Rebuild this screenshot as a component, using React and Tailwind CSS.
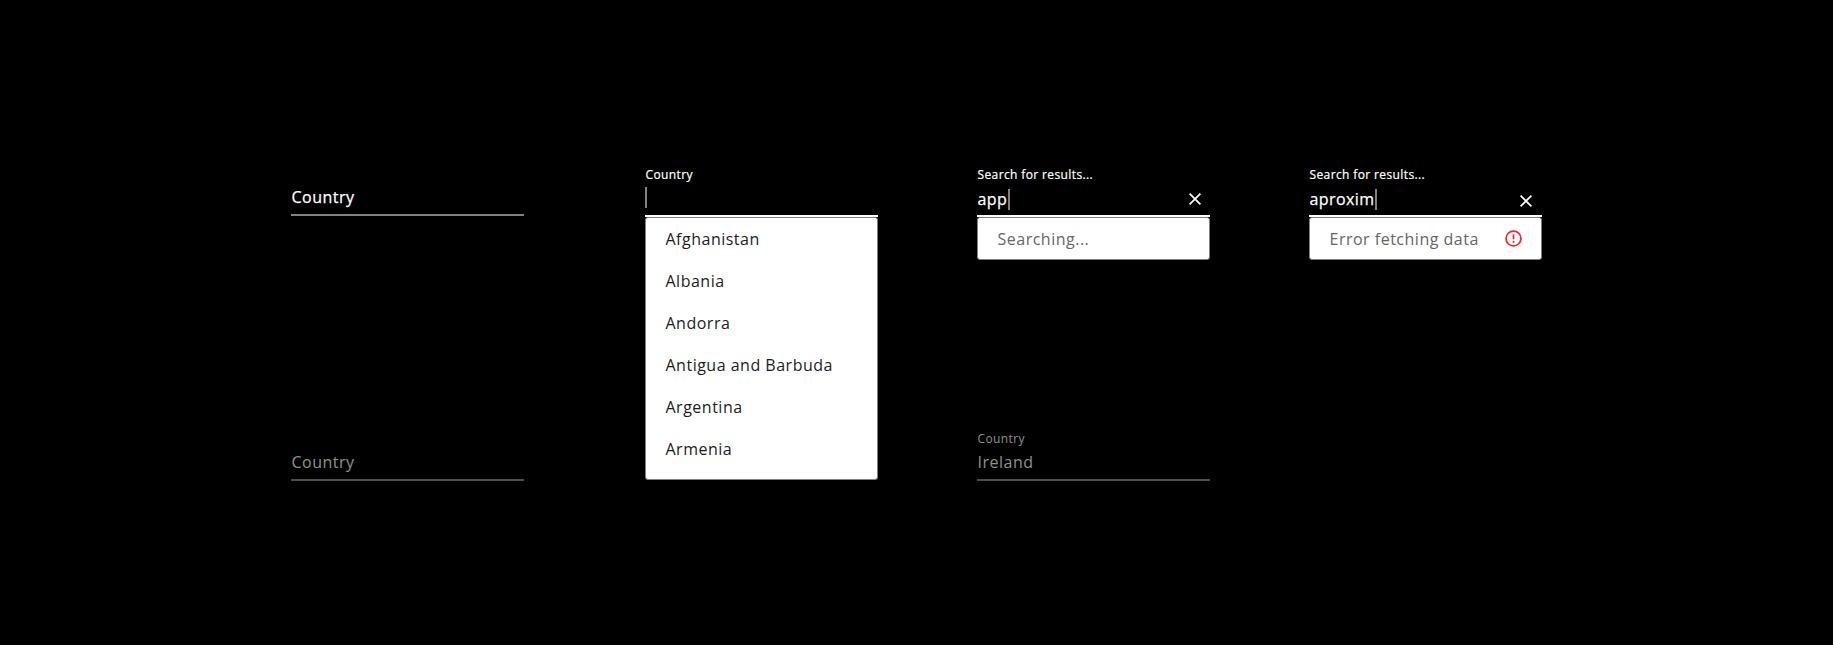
const sans = "font-['Open_Sans','Noto_Sans',sans-serif]";

const countries = ["Afghanistan", "Albania", "Andorra", "Antigua and Barbuda", "Argentina", "Armenia"];

function Caret({ className = "" }) {
  return <span className={`h-[21px] w-[2px] shrink-0 bg-[#808080] ${className}`} />;
}

function CloseIcon() {
  return (
    <svg className="block h-3 w-3" viewBox="0 0 12 12" fill="none" stroke="#fff" strokeWidth="1.7">
      <path d="M0.6 0.6 11.4 11.4M11.4 0.6 0.6 11.4" />
    </svg>
  );
}

function ErrorIcon() {
  return (
    <svg className="mb-px block h-[17px] w-[17px]" viewBox="0 0 16 16" fill="none" stroke="#f22525" strokeWidth="1.6">
      <circle cx="8" cy="8" r="7" />
      <path d="M8 3.9V8.8M8 10.3V12" />
    </svg>
  );
}

function Label({ children, disabled }) {
  return (
    <div className={`h-5 pl-[0.5px] text-[12px] leading-5 tracking-[0.38px] ${disabled ? "text-[#909090]" : "text-white [-webkit-text-stroke:0.2px_white]"}`}>
      {children}
    </div>
  );
}

function Field({ value, disabled }) {
  return (
    <div className={`flex h-[39px] flex-col justify-end border-b-2 pb-[5px] pl-[0.5px] text-[16px] leading-6 tracking-[0.5px] ${disabled ? "border-[#4d4d4d] text-[#909090]" : "border-[#808080] text-white [-webkit-text-stroke:0.25px_white]"}`}>
      {value}
    </div>
  );
}

function SearchField({ value, iconClass }) {
  return (
    <div className="flex h-[32px] items-start border-b-2 border-white pl-[0.5px] pt-[4px] text-[16px] text-white">
      <span className="leading-[21px] tracking-[0.4px] [-webkit-text-stroke:0.25px_white]">{value}</span>
      <Caret className="ml-[0.7px]" />
      <span className={`ml-auto ${iconClass}`}>
        <CloseIcon />
      </span>
    </div>
  );
}

function Panel({ children, className = "" }) {
  return (
    <div className={`rounded-[3px] border border-[#808080] bg-white pl-[19.5px] pr-[19px] text-[16px] tracking-[0.5px] ${className}`}>
      {children}
    </div>
  );
}

export default function App() {
  return (
    <main className={`flex h-[645px] w-[1833px] overflow-hidden bg-black pl-[291px] ${sans}`}>
      <section className="w-[233px] pt-[177px]">
        <Field value="Country" />
        <div className="h-[226px]" />
        <Field value="Country" disabled />
      </section>

      <section className="ml-[121px] w-[233px] pt-[165px]">
        <Label>Country</Label>
        <div className="h-[32px] border-b-2 border-white pt-[2px]">
          <div className="flex">
            <Caret />
          </div>
        </div>
        <Panel className="h-[263px] text-[#1c1c1c]">
          {countries.map((name) => (
            <div key={name} className="h-[42px] leading-[42px]">
              {name}
            </div>
          ))}
        </Panel>
      </section>

      <section className="ml-[99px] w-[233px] pt-[165px]">
        <Label>Search for results...</Label>
        <SearchField value="app" iconClass="mr-[9px] mt-[4px]" />
        <Panel className="h-[43px] leading-[42px] text-[#666]">Searching...</Panel>
        <div className="h-[169px]" />
        <Label disabled>Country</Label>
        <div className="-mt-[7px]">
          <Field value="Ireland" disabled />
        </div>
      </section>

      <section className="ml-[99px] w-[233px] pt-[165px]">
        <Label>Search for results...</Label>
        <SearchField value="aproxim" iconClass="mr-[10px] mt-[6px]" />
        <Panel className="flex h-[43px] items-center justify-between leading-[42px] text-[#666]">
          Error fetching data
          <ErrorIcon />
        </Panel>
      </section>
    </main>
  );
}
